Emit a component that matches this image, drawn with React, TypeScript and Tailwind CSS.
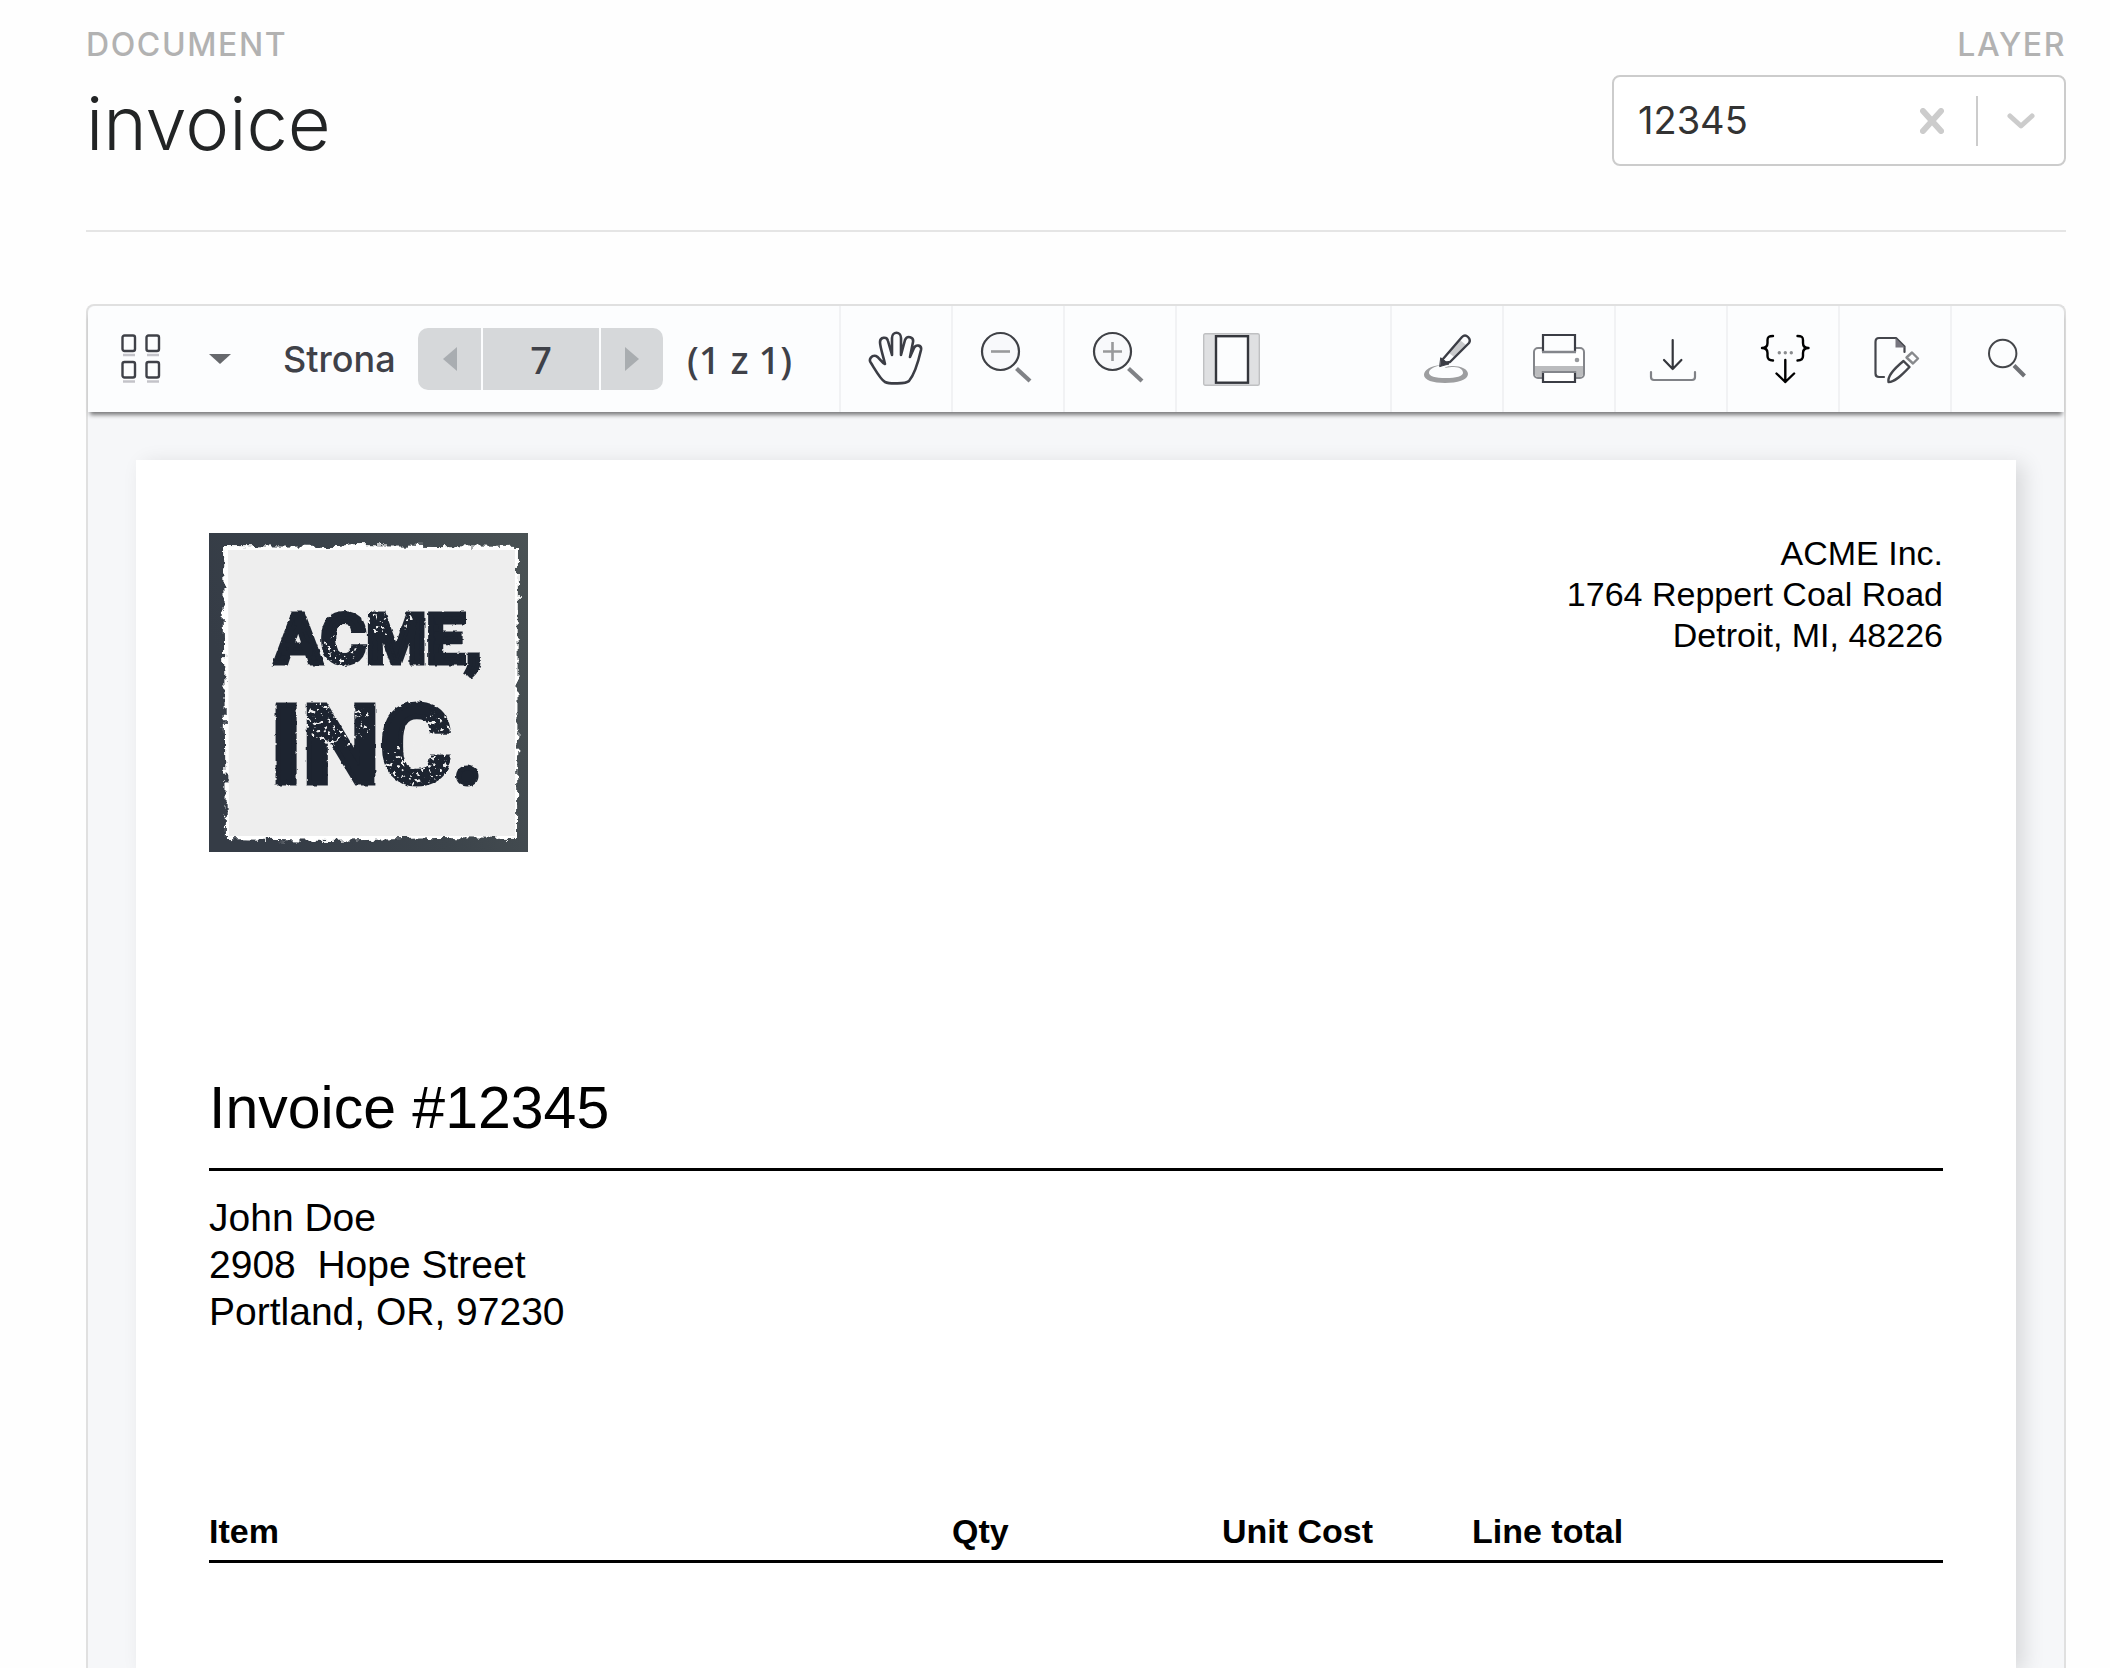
import type { ReactNode } from "react";

function ToolButton({ label, children }: { label: string; children: ReactNode }) {
  return (
    <button
      type="button"
      aria-label={label}
      className="flex w-28 shrink-0 items-center justify-center border-l-2 border-[#f1f2f4]"
    >
      <svg width="56" height="56" viewBox="0 0 56 56" fill="none" strokeLinecap="round" strokeLinejoin="round">
        {children}
      </svg>
    </button>
  );
}

function AcmeLogo() {
  return (
    <svg width="319" height="319" viewBox="0 0 319 319" role="img" aria-label="ACME, Inc. logo">
      <defs>
        <linearGradient id="frame" x1="0" y1="0.3" x2="1" y2="0">
          <stop offset="0" stopColor="#353c46" />
          <stop offset="0.5" stopColor="#3c444b" />
          <stop offset="1" stopColor="#4a5254" />
        </linearGradient>
        <filter id="torn" x="-5%" y="-5%" width="110%" height="110%" colorInterpolationFilters="sRGB">
          <feTurbulence type="fractalNoise" baseFrequency="0.12" numOctaves="4" seed="4" />
          <feDisplacementMap in="SourceGraphic" scale="10" xChannelSelector="R" yChannelSelector="G" />
        </filter>
        <filter id="worn" x="-5%" y="-5%" width="110%" height="110%" colorInterpolationFilters="sRGB">
          <feTurbulence type="fractalNoise" baseFrequency="0.2" numOctaves="2" seed="9" />
          <feDisplacementMap in="SourceGraphic" scale="3" xChannelSelector="R" yChannelSelector="G" />
        </filter>
        <filter id="specks" x="0" y="0" width="100%" height="100%">
          <feTurbulence type="fractalNoise" baseFrequency="0.26" numOctaves="2" seed="7" result="noise" />
          <feColorMatrix
            in="noise"
            type="matrix"
            values="0 0 0 0 0.86 0 0 0 0 0.86 0 0 0 0 0.86 14 0 0 0 -8.4"
            result="dots"
          />
          <feComposite in="dots" in2="SourceGraphic" operator="in" />
        </filter>
      </defs>
      <rect width="319" height="319" fill="url(#frame)" />
      <path d="M14 13 130 14 145 12 309 14 308 306 230 305 120 308 17 306Z" fill="#fff" filter="url(#torn)" />
      <path d="M19 17H306V303H20Z" fill="#eeeeee" />
      <g
        fill="#1d2430"
        stroke="#1d2430"
        strokeWidth="5"
        fontWeight="700"
        fontFamily="Roboto, 'Liberation Sans', sans-serif"
        filter="url(#worn)"
      >
        <text x="66" y="130" fontSize="69">
          ACME,
        </text>
        <text x="61" y="250" fontSize="110">
          INC.
        </text>
      </g>
      <g filter="url(#specks)">
        <ellipse cx="130" cy="118" rx="18" ry="16" />
        <ellipse cx="178" cy="88" rx="26" ry="14" />
        <ellipse cx="128" cy="190" rx="34" ry="24" />
        <ellipse cx="208" cy="232" rx="34" ry="24" />
        <ellipse cx="230" cy="190" rx="14" ry="12" />
      </g>
    </svg>
  );
}

const tools = [
  {
    label: "Annotate",
    icon: (
      <>
        <path
          d="M22 34C11 35 5 39 5 44c0 5 9 8 21 8s23-3 23-9c0-5-7-8-15-8-5 0-8 1-8 2 3-1 6-1 9-1 6 0 9 3 9 6 0 3-7 5-17 5-11 0-17-2-17-5 0-4 5-6 12-8z"
          fill="#9d9ea0"
        />
        <path d="M35 16 41 9 47 14 35 26 30 22z" fill="#c9cacc" />
        <path d="M24 28 43 6q3-3 6 0t1 6L31 31l-6 1-2-3z" stroke="#3b3d45" strokeWidth="2.4" />
        <path d="M22 27 30 33 26 34 21 35.5z" fill="#3b3d45" stroke="#3b3d45" />
      </>
    ),
  },
  {
    label: "Print",
    icon: (
      <>
        <rect x="3" y="17" width="50" height="30" rx="4" fill="#fff" stroke="#84868b" strokeWidth="2" />
        <path d="M4 35H52V43q0 3-3 3H7q-3 0-3-3z" fill="#bbbcbe" />
        <path d="M12 4H44V21H12z" fill="#fcfdfe" />
        <path d="M12 21V4H44V21" stroke="#3b3d45" strokeWidth="2.2" strokeLinecap="butt" strokeLinejoin="miter" />
        <path d="M11 21H45" stroke="#84868b" strokeWidth="2.4" strokeLinecap="butt" />
        <path d="M12 41H44V51H12z" fill="#fff" stroke="#3b3d45" strokeWidth="2.2" strokeLinejoin="miter" />
        <path d="M11 41H45" stroke="#84868b" strokeWidth="2.2" strokeLinecap="butt" />
        <circle cx="46" cy="29" r="2.3" fill="#97999c" />
      </>
    ),
  },
  {
    label: "Download",
    icon: (
      <>
        <path d="M29.7 9V38M21 29l8.7 9 8.7-9" stroke="#34363c" strokeWidth="2.2" />
        <path d="M8 41v5q0 3 3 3H49q3 0 3-3v-5" stroke="#808287" strokeWidth="2.2" />
      </>
    ),
  },
  {
    label: "Export JSON",
    icon: (
      <>
        <path d="M18 5c-4 0-5.500 1-5.500 4v3c0 3-1.500 5-5.500 5 4 0 5.500 2 5.500 5v3c0 3 1.500 4.500 5.500 4.500" stroke="#000" strokeWidth="2.4" />
        <path d="M42.500 5c4 0 5.500 1 5.500 4v3c0 3 1.500 5 5.500 5-4 0-5.500 2-5.500 5v3c0 3-1.500 4.500-5.500 4.500" stroke="#000" strokeWidth="2.4" />
        <g fill="#8a8c8f">
          <circle cx="24.3" cy="21.7" r="1.7" />
          <circle cx="30.3" cy="21.7" r="1.7" />
          <circle cx="36.3" cy="21.7" r="1.7" />
        </g>
        <path d="M30.3 29V51M21.5 42.5l8.8 8.5 8.8-8.5" stroke="#000" strokeWidth="2.4" />
      </>
    ),
  },
  {
    label: "Edit document",
    icon: (
      <>
        <path d="M17 46H12q-3.500 0-3.500-3.500V11Q8.500 7 12 7H29L37.500 15.500V21" stroke="#44464c" strokeWidth="2.2" />
        <path d="M28.500 7 38 16.500H28.500z" fill="#77767f" />
        <path d="M21.500 51c-1-5 4-12 15-21l6 6C35 44 28 51 21.500 51z" stroke="#44464c" strokeWidth="2.4" />
        <path d="M39.500 26.500 45 21.500 51 27.500 46 32.500z" stroke="#87898c" strokeWidth="2.4" />
      </>
    ),
  },
  {
    label: "Search",
    icon: (
      <>
        <circle cx="23.7" cy="22.5" r="13.7" stroke="#44464a" strokeWidth="2" />
        <path d="M35 34.500 45.500 45" stroke="#707276" strokeWidth="4" strokeLinecap="butt" />
      </>
    ),
  },
];

export default function App() {
  return (
    <div className="flex min-h-screen flex-col bg-[#fefefe] pt-[25px] pr-11 pl-[86px] font-[Inter,sans-serif]">
      <header className="flex items-start justify-between border-b-2 border-[#e5e5e5] pb-[59px]">
        <div>
          <p className="text-[32px] leading-[40px] font-medium tracking-wider text-[#b2b2b2]">DOCUMENT</p>
          <h1 className="mt-2.5 text-[74px] leading-[96px] font-light text-[#222425]">invoice</h1>
        </div>
        <div className="flex w-[454px] flex-col">
          <label htmlFor="layer" className="text-right text-[32px] leading-[40px] font-medium tracking-wider text-[#b2b2b2]">
            LAYER
          </label>
          <div className="mt-2.5 flex h-[91px] items-center rounded-lg border-2 border-[#cccccc] bg-white">
            <select
              id="layer"
              className="h-full min-w-0 flex-1 appearance-none bg-transparent pl-6 text-[38px] text-[#333333]"
            >
              <option>12345</option>
            </select>
            <button type="button" aria-label="Clear layer" className="mr-8">
              <svg width="24" height="26" viewBox="0 0 24 26" stroke="#cccccc" strokeWidth="6" strokeLinecap="round">
                <path d="M3 3 21 23M21 3 3 23" />
              </svg>
            </button>
            <span className="h-[50px] w-0.5 bg-[#cccccc]" />
            <svg className="mx-7" width="30" height="18" viewBox="0 0 30 18" fill="none" stroke="#cccccc" strokeWidth="5" strokeLinecap="round" strokeLinejoin="round">
              <path d="M4 4 15 14 26 4" />
            </svg>
          </div>
        </div>
      </header>

      <main className="mt-[72px] flex flex-1 flex-col rounded-t-lg border-2 border-b-0 border-[#e0e0e0] bg-[#f6f7f9]">
        <div className="relative flex h-[106px] rounded-t-lg bg-[#fcfdfe] pr-0.5 text-[36px] text-[#3f4148] shadow-[0_5px_4px_-2px_rgba(0,0,0,0.5)]">
          <div className="flex w-[751px] shrink-0 items-center pl-[33px]">
            <button type="button" aria-label="Thumbnails">
              <svg width="40" height="50" viewBox="0 0 40 50" fill="none" strokeWidth="2.4">
                <g stroke="#3f4148">
                  <rect x="1.5" y="1.5" width="12.5" height="15.5" rx="2" />
                  <rect x="25.5" y="1.5" width="12.5" height="15.5" rx="2" />
                  <rect x="1.5" y="28" width="12.5" height="15.5" rx="2" />
                  <rect x="25.5" y="28" width="12.5" height="15.5" rx="2" />
                </g>
                <path d="M2 21H14M26 21H38M2 47.500H14M26 47.500H38" stroke="#c3c3c9" />
              </svg>
            </button>
            <button type="button" aria-label="Sidebar options" className="ml-12">
              <svg width="22" height="10" viewBox="0 0 22 10" fill="#66686c">
                <path d="M0 0H22L11 10z" />
              </svg>
            </button>
            <label htmlFor="page" className="ml-[52px] w-[135px] font-medium">
              Strona
            </label>
            <div className="flex gap-0.5">
              <button type="button" aria-label="Previous page" className="flex h-[62px] w-[63px] items-center justify-center rounded-l-[10px] bg-[#d6d8da]">
                <svg width="14" height="24" viewBox="0 0 14 24" fill="#a9adb1">
                  <path d="M14 0V24L0 12z" />
                </svg>
              </button>
              <input
                id="page"
                defaultValue="7"
                className="h-[62px] w-[116px] bg-[#d6d8da] text-center font-['Noto_Sans',sans-serif] text-[38px] font-medium"
              />
              <button type="button" aria-label="Next page" className="flex h-[62px] w-[62px] items-center justify-center rounded-r-[10px] bg-[#d6d8da]">
                <svg width="14" height="24" viewBox="0 0 14 24" fill="#a9adb0">
                  <path d="M0 0V24L14 12z" />
                </svg>
              </button>
            </div>
            <span className="ml-6 font-['Noto_Sans',sans-serif] text-[38px] font-medium whitespace-nowrap">(1 z 1)</span>
          </div>

          <ToolButton label="Pan">
            <path
              d="M17 51C13 49 8 40 3 32c-3-4 1-8 5-7 3 1 5 6 9 8C15 24 12 16 12 11c0-5 7-6 8-1l4 14L24 7c0-7 9-7 9 0l0 17L37 9c2-5 9-3 8 2l-3 15L46 17c2-4 8-3 7 2-3 13-7 25-12 31-3 3-20 3-24 1z"
              stroke="#3b3d45"
              strokeWidth="2.6"
            />
          </ToolButton>
          <ToolButton label="Zoom out">
            <circle cx="20.5" cy="20.5" r="18.5" stroke="#3f4146" strokeWidth="2.2" fill="#f8f9fb" />
            <path d="M11 20.500H30" stroke="#98999b" strokeWidth="2.6" strokeLinecap="butt" />
            <path d="M36.500 37.500 50 50" stroke="#808286" strokeWidth="4.2" strokeLinecap="butt" />
          </ToolButton>
          <ToolButton label="Zoom in">
            <circle cx="20.5" cy="20.5" r="18.5" stroke="#3f4146" strokeWidth="2.2" fill="#f8f9fb" />
            <path d="M11 20.500H30M20.500 11V30" stroke="#98999b" strokeWidth="2.6" strokeLinecap="butt" />
            <path d="M36.500 37.500 50 50" stroke="#808286" strokeWidth="4.2" strokeLinecap="butt" />
          </ToolButton>
          <div className="flex flex-1 items-center border-l-2 border-[#f1f2f4] pl-[26px]">
            <button type="button" aria-label="Fit page">
              <svg width="57" height="53" viewBox="0 0 57 53">
                <rect x="0.7" y="0.7" width="55.6" height="51.6" rx="1.5" fill="#dfe0e2" stroke="#bfc0c2" strokeWidth="1.4" />
                <rect x="13" y="3.2" width="32" height="46.5" fill="#fcfdfe" stroke="#34363c" strokeWidth="2.4" />
              </svg>
            </button>
          </div>
          {tools.map((tool) => (
            <ToolButton key={tool.label} label={tool.label}>
              {tool.icon}
            </ToolButton>
          ))}
        </div>

        <article className="mx-12 mt-12 flex-1 bg-white p-[73px] pb-0 font-['Liberation_Sans',Arial,sans-serif] text-black shadow-[8px_4px_20px_rgba(0,0,0,0.12)]">
          <div className="flex items-start justify-between">
            <AcmeLogo />
            <address className="text-right text-[34px] leading-[41px] not-italic">
              ACME Inc.
              <br />
              1764 Reppert Coal Road
              <br />
              Detroit, MI, 48226
            </address>
          </div>
          <h2 className="mt-[226px] border-b-[3px] border-black pb-[30px] text-[59px] leading-[60px]">Invoice #12345</h2>
          <address className="pt-[23px] text-[39px] leading-[47px] not-italic">
            John Doe
            <br />
            2908&nbsp; Hope Street
            <br />
            Portland, OR, 97230
          </address>
          <table className="mt-44 w-full table-fixed border-collapse text-left text-[34px] leading-[41px]">
            <thead>
              <tr className="border-b-[3px] border-black">
                <th className="w-[743px] pb-2">Item</th>
                <th className="w-[270px] pb-2">Qty</th>
                <th className="w-[250px] pb-2">Unit Cost</th>
                <th className="pb-2">Line total</th>
              </tr>
            </thead>
          </table>
        </article>
      </main>
    </div>
  );
}
